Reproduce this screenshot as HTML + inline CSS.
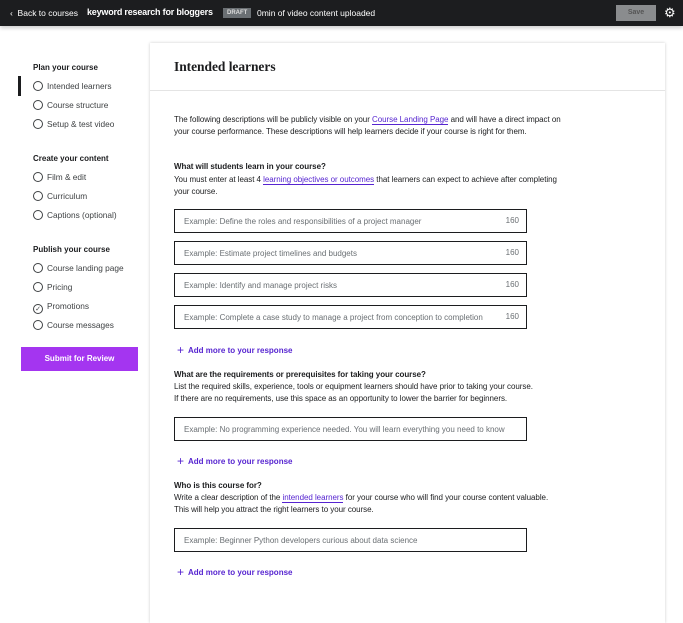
<!DOCTYPE html>
<html><head><style>
*{margin:0;padding:0;box-sizing:border-box}
body{width:683px;height:617px;overflow:hidden;background:#fff;font-family:"Liberation Sans",sans-serif;color:#1c1d1f;position:relative;font-size:8px}
.hdr{position:absolute;left:0;top:0;width:683px;height:26px;background:#1c1d1f;color:#fff;box-shadow:0 2px 4px rgba(0,0,0,.2)}
.hdr span{position:absolute;top:8px;font-size:8.5px;white-space:nowrap}
.a{position:absolute;white-space:nowrap}
.sh{font-weight:bold;font-size:8px;left:33px}
.it{left:33px;font-size:8.3px;color:#3e4143}
.it i{display:inline-block;width:10px;height:10px;border:1px solid #3e4143;border-radius:50%;vertical-align:-2px;margin-right:4px;position:relative}
.card{position:absolute;left:150px;top:43px;width:515px;height:580px;background:#fff;box-shadow:0 0 3px rgba(0,0,0,.2)}
.c{position:absolute;left:24px;white-space:nowrap;font-size:8px;line-height:11.5px;color:#1c1d1f;letter-spacing:-0.05px}
.c u{color:#5624d0;text-decoration:none;border-bottom:1px solid #5624d0}
.q{font-weight:bold}
.in{position:absolute;left:24px;width:353px;height:24px;border:1px solid #1c1d1f;font-size:8px;color:#6a6f73;padding:7px 0 0 9px}
.in b{position:absolute;right:7px;top:6px;font-weight:normal}
.add{position:absolute;left:27px;color:#5624d0;font-weight:bold;font-size:8px}
.add em{font-style:normal;font-size:12px;font-weight:normal;vertical-align:-1px;margin-right:4px}
</style></head><body>
<div class="hdr">
<span style="left:10px">‹ &nbsp;Back to courses</span>
<span style="left:87px;font-weight:bold;font-size:9px;top:7px;letter-spacing:-0.2px">keyword research for bloggers</span>
<span style="left:223px;top:8px;background:#6a6f73;color:#ddd;font-size:6px;font-weight:bold;padding:2px 4px">DRAFT</span>
<span style="left:257px">0min of video content uploaded</span>
<span style="left:616px;top:5px;width:40px;height:16px;background:#8a8c8e;color:#555;font-size:7px;text-align:center;line-height:16px;font-weight:bold;padding:0">Save</span>
<span style="left:664px;top:5px;font-size:13px">⚙</span>
</div>
<div class="a" style="left:18px;top:76px;width:3px;height:20px;background:#1c1d1f"></div>
<div class="a sh" style="top:63px">Plan your course</div>
<div class="a it" style="top:81px"><i></i>Intended learners</div>
<div class="a it" style="top:100px"><i></i>Course structure</div>
<div class="a it" style="top:119px"><i></i>Setup &amp; test video</div>
<div class="a sh" style="top:154px">Create your content</div>
<div class="a it" style="top:172px"><i></i>Film &amp; edit</div>
<div class="a it" style="top:191px"><i></i>Curriculum</div>
<div class="a it" style="top:210px"><i></i>Captions (optional)</div>
<div class="a sh" style="top:245px">Publish your course</div>
<div class="a it" style="top:263px"><i></i>Course landing page</div>
<div class="a it" style="top:282px"><i></i>Pricing</div>
<div class="a it" style="top:301px"><i style="font-style:normal;font-size:7px;text-align:center;line-height:9px">✓</i>Promotions</div>
<div class="a it" style="top:320px"><i></i>Course messages</div>
<div class="a" style="left:21px;top:347px;width:117px;height:24px;background:#a435f0;color:#fff;font-weight:bold;font-size:8px;text-align:center;line-height:24px">Submit for Review</div>
<div class="card">
<div class="c" style="top:15px;font-family:'Liberation Serif',serif;font-weight:bold;font-size:13.5px;line-height:18px">Intended learners</div>
<div class="a" style="left:0;top:47px;width:515px;height:1px;background:#e4e4e4"></div>
<div class="c" style="top:71px">The following descriptions will be publicly visible on your <u>Course Landing Page</u> and will have a direct impact on<br>your course performance. These descriptions will help learners decide if your course is right for them.</div>
<div class="c q" style="top:118px">What will students learn in your course?</div>
<div class="c" style="top:131px">You must enter at least 4 <u>learning objectives or outcomes</u> that learners can expect to achieve after completing<br>your course.</div>
<div class="in" style="top:166px">Example: Define the roles and responsibilities of a project manager<b>160</b></div>
<div class="in" style="top:198px">Example: Estimate project timelines and budgets<b>160</b></div>
<div class="in" style="top:230px">Example: Identify and manage project risks<b>160</b></div>
<div class="in" style="top:262px">Example: Complete a case study to manage a project from conception to completion<b>160</b></div>
<div class="add" style="top:300px"><em>+</em>Add more to your response</div>
<div class="c q" style="top:326px">What are the requirements or prerequisites for taking your course?</div>
<div class="c" style="top:338px">List the required skills, experience, tools or equipment learners should have prior to taking your course.<br>If there are no requirements, use this space as an opportunity to lower the barrier for beginners.</div>
<div class="in" style="top:374px">Example: No programming experience needed. You will learn everything you need to know</div>
<div class="add" style="top:411px"><em>+</em>Add more to your response</div>
<div class="c q" style="top:437px">Who is this course for?</div>
<div class="c" style="top:449px">Write a clear description of the <u>intended learners</u> for your course who will find your course content valuable.<br>This will help you attract the right learners to your course.</div>
<div class="in" style="top:485px">Example: Beginner Python developers curious about data science</div>
<div class="add" style="top:522px"><em>+</em>Add more to your response</div>
</div>
</body></html>
